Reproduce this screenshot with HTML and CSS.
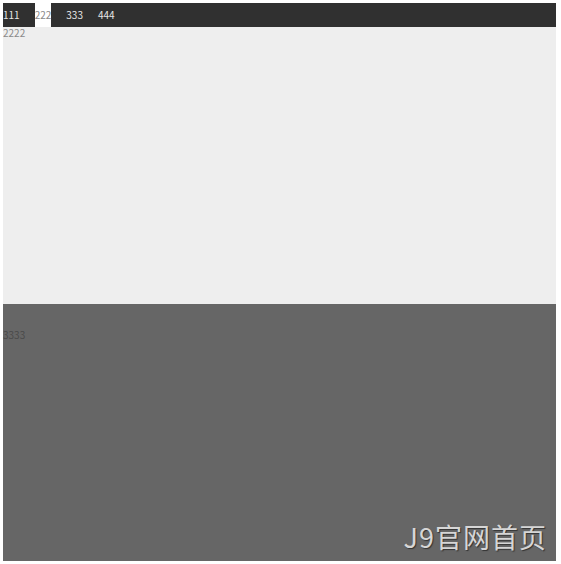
FILE: index.html
```html
<!DOCTYPE html>
<html lang="zh">
<head>
<meta charset="utf-8">
<title>Tabs</title>
<link rel="stylesheet" href="styles.css">
</head>
<body>
<div class="page">
  <ul class="nav">
    <li class="tab">111</li>
    <li class="tab active">222</li>
    <li class="tab">333</li>
    <li class="tab">444</li>
  </ul>
  <div class="panel light">2222</div>
  <div class="panel dark"><span class="dark-text">3333</span></div>
  <div class="watermark">J9官网首页</div>
</div>
</body>
</html>
```
FILE: styles.css
```css
html, body {
  margin: 0;
  padding: 0;
  background: #ffffff;
}
.page {
  position: relative;
  margin: 3px 0 0 3px;
  width: 553px;
  font-family: "Noto Sans CJK SC", "Noto Sans", sans-serif;
  font-size: 10px;
}
.nav {
  list-style: none;
  margin: 0;
  padding: 0;
  height: 24px;
  background: #303030;
  display: flex;
  gap: 15px;
}
.tab {
  line-height: 24px;
  color: #e6e6e6;
}
.tab.active {
  background: #ffffff;
  color: #8a8a8a;
}
.panel.light {
  height: 277px;
  background: #eeeeee;
  color: #8a8a8a;
  line-height: 12px;
}
.panel.dark {
  height: 257px;
  background: #666666;
  color: #4a4a4a;
  padding-top: 25px;
  box-sizing: border-box;
  line-height: 12px;
}
.watermark {
  position: absolute;
  right: 9px;
  bottom: 8px;
  font-size: 27px;
  line-height: 32px;
  color: #d6d6d6;
  text-shadow: 1px 1px 1px #333333;
  letter-spacing: 1px;
}
```
